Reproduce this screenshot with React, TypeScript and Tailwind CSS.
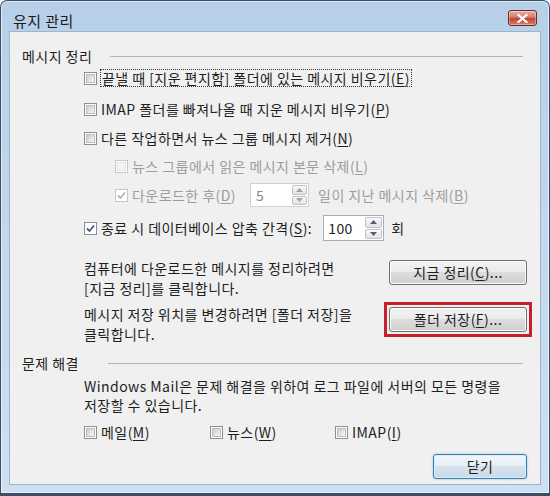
import clsx from 'clsx';
import type { ReactNode } from 'react';

// Vista 스타일 체크박스
function CheckBox({ checked, disabled }: { checked?: boolean; disabled?: boolean }) {
  return (
    <span
      className={clsx(
        'inline-flex h-[13px] w-[13px] shrink-0 items-center justify-center border bg-white',
        disabled ? 'border-[#c6c6c6]' : 'border-[#8e8f8f]'
      )}
    >
      {checked ? (
        <svg width="11" height="11" viewBox="0 0 11 11">
          <path
            d="M2 5.5 L4.5 8 L9 2.5"
            fill="none"
            stroke={disabled ? '#b5b5b5' : '#3d5a8a'}
            strokeWidth="1.8"
          />
        </svg>
      ) : (
        <span
          className={clsx(
            'h-[9px] w-[9px] border',
            disabled
              ? 'border-[#e2e2e2] bg-[#f4f4f4]'
              : 'border-[#b8bcc2] bg-gradient-to-br from-[#c9cdd2] to-[#f7f7f7]'
          )}
        />
      )}
    </span>
  );
}

function SpinArrow({ up, disabled }: { up?: boolean; disabled?: boolean }) {
  return (
    <span className="flex flex-1 items-center justify-center rounded-[2px] border border-[#c2c2c2] bg-gradient-to-b from-[#fafafa] to-[#e2e2e2]">
      <svg width="7" height="4" viewBox="0 0 7 4">
        <path d={up ? 'M0 4 L3.5 0 L7 4 Z' : 'M0 0 L3.5 4 L7 0 Z'} fill={disabled ? '#9aa3ad' : '#4c607a'} />
      </svg>
    </span>
  );
}

function Key({ k }: { k: string }) {
  return (
    <>
      (<u className="underline-offset-2">{k}</u>)
    </>
  );
}

function Button({ children, focus }: { children: ReactNode; focus?: boolean }) {
  return (
    <button
      type="button"
      className={clsx(
        'flex h-[25px] items-center justify-center rounded-[3px] border text-[#1e1e1e]',
        focus
          ? 'w-[94px] border-[#3c7fb1] bg-[linear-gradient(#f1f6fa_0%,#e7eff5_49%,#d6e3ee_50%,#c9dae8_100%)] shadow-[inset_0_0_0_1px_#d9edf8,0_0_2px_#7ab6de]'
          : 'w-[138px] border-[#707070] bg-[linear-gradient(#f2f2f2_0%,#ebebeb_49%,#dddddd_50%,#cfcfcf_100%)] shadow-[inset_0_0_0_1px_#fbfbfb]'
      )}
    >
      {children}
    </button>
  );
}

export default function App() {
  return (
    <div className="h-[496px] w-[550px] bg-white font-['Noto_Sans_CJK_KR','Noto_Sans',sans-serif] text-[14px] tracking-[0.45px] text-[#1e1e1e]">
      <div className="flex h-full flex-col rounded-t-[7px] border border-b-[3px] border-[#3b4e63] bg-gradient-to-b from-[#b8cfe9] via-[#c3d8ee] to-[#cde0f3] px-[8px] pb-[8px] shadow-[inset_0_0_0_1px_rgba(255,255,255,0.55)]">
        {/* 제목 표시줄 */}
        <div className="flex h-[30px] shrink-0 items-start justify-between pl-[4px] pr-[4px]">
          <span className="mt-[10px] text-[15px] leading-[20px] text-[#1a1a1a]">유지 관리</span>
          <span className="mt-[9px] flex h-[16px] w-[29px] items-center justify-center rounded-[3px] border border-[#6a2a24] bg-[linear-gradient(#eab0a4_0%,#d7796a_45%,#c2412f_55%,#d8806f_100%)] shadow-[inset_0_0_0_1px_rgba(255,255,255,0.35)]">
            <svg width="11" height="9" viewBox="0 0 11 9">
              <path d="M1.5 1 L9.5 8 M9.5 1 L1.5 8" stroke="#ffffff" strokeWidth="2.2" strokeLinecap="square" />
            </svg>
          </span>
        </div>

        {/* 클라이언트 영역 */}
        <div className="flex flex-1 flex-col border border-[#9fb3ca] bg-[#f0f0f0] pl-[12px] pr-[13px]">
          <div className="mt-[14px] flex h-[20px] items-center">
            <span className="w-[88px]">메시지 정리</span>
            <span className="mr-[4px] flex-1 border-t border-[#b4b4b4]" />
          </div>

          <div className="mt-[2px] ml-[62px] flex h-[20px] items-center gap-[3px]">
            <CheckBox />
            <span className="border border-dotted border-[#333] px-px leading-[16px]">
              끝낼 때 [지운 편지함] 폴더에 있는 메시지 비우기<Key k="E" />
            </span>
          </div>

          <div className="mt-[11px] ml-[62px] flex h-[20px] items-center gap-[4px]">
            <CheckBox />
            <span>
              IMAP 폴더를 빠져나올 때 지운 메시지 비우기<Key k="P" />
            </span>
          </div>

          <div className="mt-[9px] ml-[62px] flex h-[20px] items-center gap-[4px]">
            <CheckBox />
            <span>
              다른 작업하면서 뉴스 그룹 메시지 제거<Key k="N" />
            </span>
          </div>

          <div className="mt-[8px] ml-[93px] flex h-[20px] items-center gap-[4px] text-[#9d9d9d]">
            <CheckBox disabled />
            <span>
              뉴스 그룹에서 읽은 메시지 본문 삭제<Key k="L" />
            </span>
          </div>

          <div className="mt-[6px] ml-[93px] flex h-[26px] items-center text-[#9d9d9d]">
            <CheckBox checked disabled />
            <span className="ml-[4px]">
              다운로드한 후<Key k="D" />
            </span>
            <div className="ml-[14px] flex h-[24px] w-[59px] border border-[#cfd1d4] bg-white">
              <span className="flex-1 pl-[5px] leading-[22px] text-[#8a8a8a]">5</span>
              <div className="flex w-[17px] flex-col gap-px p-px">
                <SpinArrow up disabled />
                <SpinArrow disabled />
              </div>
            </div>
            <span className="ml-[9px]">
              일이 지난 메시지 삭제<Key k="B" />
            </span>
          </div>

          <div className="mt-[7px] ml-[62px] flex h-[26px] items-center">
            <CheckBox checked />
            <span className="ml-[4px]">
              종료 시 데이터베이스 압축 간격<Key k="S" />:
            </span>
            <div className="ml-[11px] flex h-[26px] w-[61px] border border-[#abadb3] bg-white">
              <span className="flex-1 pl-[4px] leading-[24px]">100</span>
              <div className="flex w-[19px] flex-col gap-px p-px">
                <SpinArrow up />
                <SpinArrow />
              </div>
            </div>
            <span className="ml-[7px]">회</span>
          </div>

          <div className="mt-[17px] ml-[62px] flex items-start justify-between">
            <p className="leading-[20px]">
              컴퓨터에 다운로드한 메시지를 정리하려면
              <br />
              [지금 정리]를 클릭합니다.
            </p>
            <div className="mt-[2px]">
              <Button>
                지금 정리<Key k="C" />...
              </Button>
            </div>
          </div>

          <div className="mt-[6px] ml-[62px] flex items-start justify-between">
            <p className="leading-[20px]">
              메시지 저장 위치를 변경하려면 [폴더 저장]을
              <br />
              클릭합니다.
            </p>
            <div className="relative mt-[3px]">
              <Button>
                폴더 저장<Key k="F" />...
              </Button>
              <span className="pointer-events-none absolute -inset-x-[5px] -inset-y-[5px] border-[3px] border-[#c8202b]" />
            </div>
          </div>

          <div className="mt-[9px] flex h-[20px] items-center">
            <span className="w-[86px]">문제 해결</span>
            <span className="mr-[4px] flex-1 border-t border-[#b4b4b4]" />
          </div>

          <p className="mt-[4px] ml-[62px] leading-[19px]">
            Windows Mail은 문제 해결을 위하여 로그 파일에 서버의 모든 명령을
            <br />
            저장할 수 있습니다.
          </p>

          <div className="mt-[7px] ml-[62px] flex h-[20px] items-center">
            <div className="flex w-[126px] items-center gap-[4px]">
              <CheckBox />
              <span>
                메일<Key k="M" />
              </span>
            </div>
            <div className="flex w-[125px] items-center gap-[4px]">
              <CheckBox />
              <span>
                뉴스<Key k="W" />
              </span>
            </div>
            <div className="flex items-center gap-[4px]">
              <CheckBox />
              <span>
                IMAP<Key k="I" />
              </span>
            </div>
          </div>

          <div className="mt-[12px] flex justify-end">
            <Button focus>닫기</Button>
          </div>
        </div>
      </div>
    </div>
  );
}
